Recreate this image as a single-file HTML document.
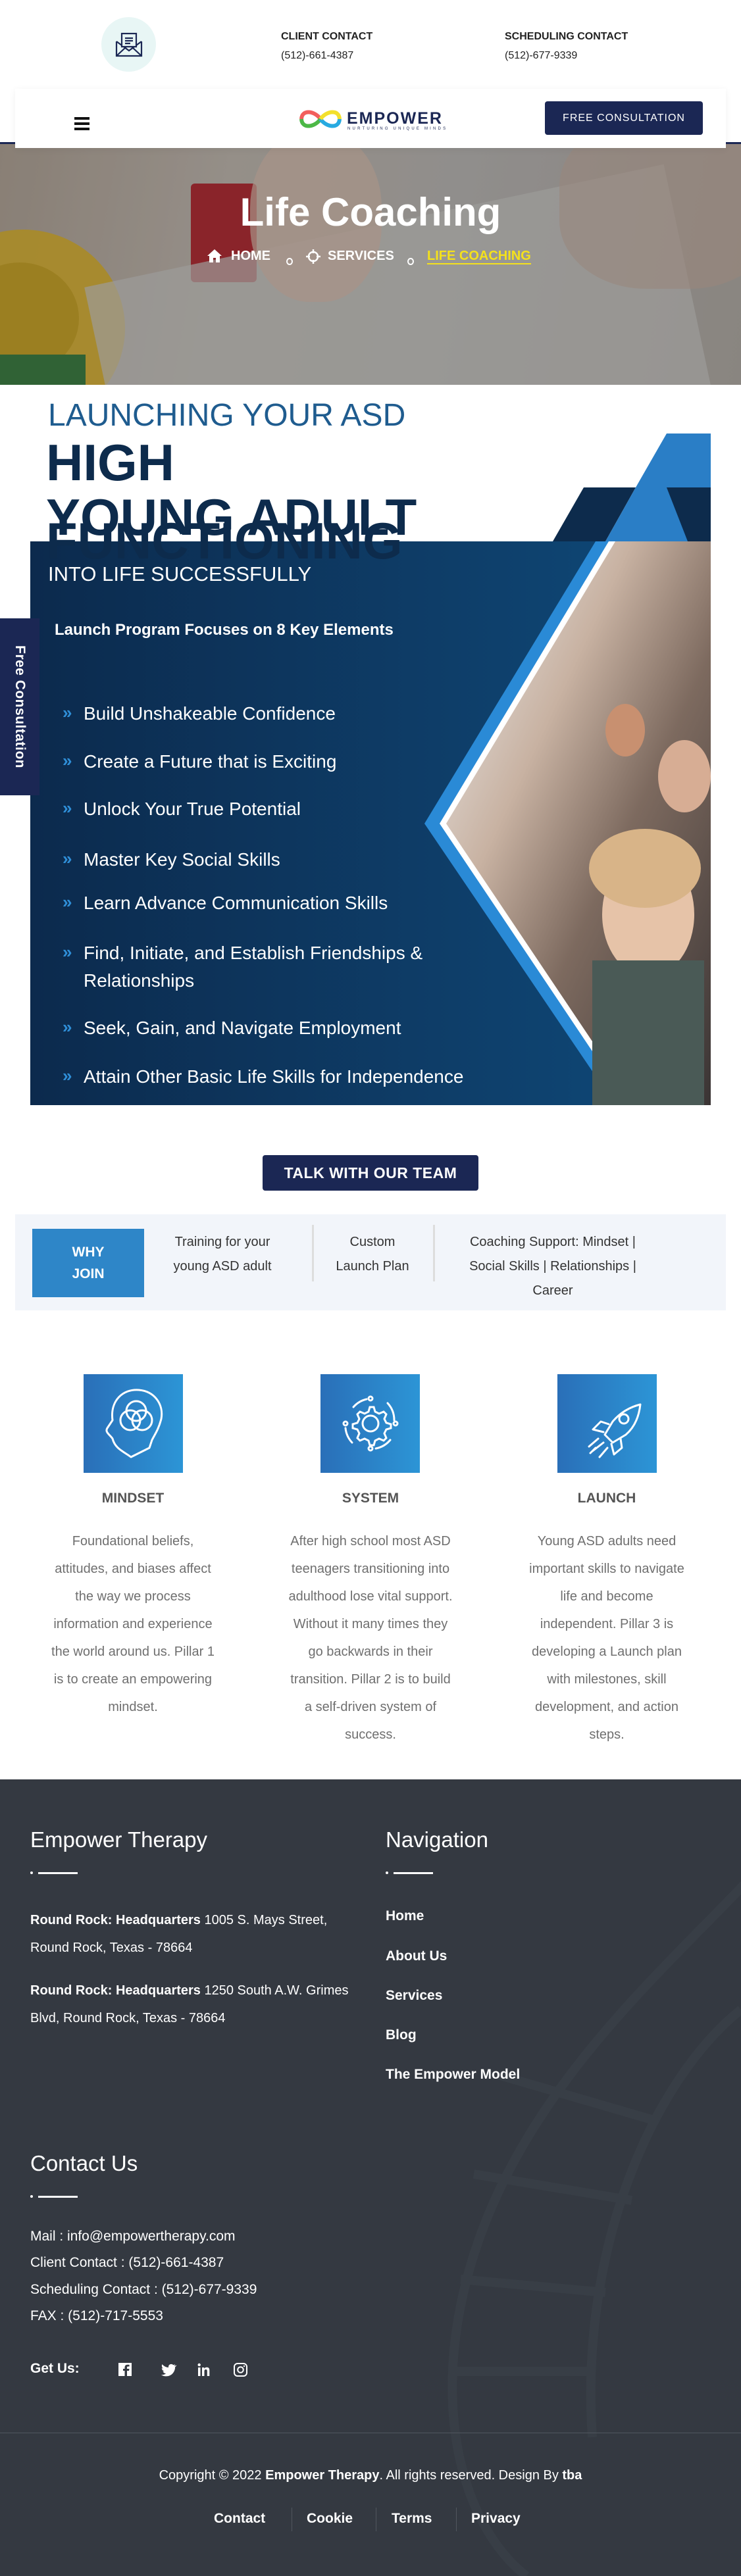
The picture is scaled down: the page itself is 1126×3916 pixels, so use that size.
<!DOCTYPE html>
<html><head><meta charset="utf-8">
<style>
*{box-sizing:border-box;margin:0;padding:0}
body{width:1126px;height:3916px;overflow:hidden;background:#fff;font-family:"Liberation Sans",sans-serif;position:relative}
.a{position:absolute}
.hd{font-weight:bold;font-size:16px;color:#222}
.ph{font-size:16px;color:#222}
.bul{position:absolute;left:95px;color:#2f8fd8;font-size:26px;font-weight:bold}
.bt{position:absolute;left:127px;color:#fff;font-size:28px;line-height:42px}
.pt{position:absolute;width:256px;text-align:center;color:#6f6f6f;font-size:20px;line-height:42px}
.ptt{position:absolute;width:300px;text-align:center;color:#555;font-size:21px;font-weight:bold}
.ib{position:absolute;top:2089px;width:151px;height:150px;background:linear-gradient(90deg,#2a6fb8,#2c95d6)}
.ft{color:#fff}
.fh{position:absolute;font-size:33px;color:#fff}
.ul{position:absolute;height:3px;background:#fff}
.nl{position:absolute;left:586px;font-size:21px;font-weight:bold;color:#fff}
.ci{position:absolute;left:46px;font-size:21px;color:#fff}
</style></head><body>

<div class="a" style="left:154px;top:26px;width:83px;height:83px;border-radius:50%;background:#e8f6f5"></div>
<svg class="a" style="left:175px;top:49px" width="42" height="38" viewBox="0 0 42 38" fill="none" stroke="#1b2754" stroke-width="2.2">
<path d="M2 14 L2 36 L40 36 L40 14"/><path d="M2 36 L17 22 M40 36 L25 22"/><path d="M2 14 L21 28 L40 14"/><rect x="10" y="2" width="22" height="20" fill="#e8f6f5"/><path d="M15 9h12M15 13h12M15 17h8"/></svg>
<div class="a hd" style="left:427px;top:47px">CLIENT CONTACT</div>
<div class="a ph" style="left:427px;top:76px">(512)-661-4387</div>
<div class="a hd" style="left:767px;top:47px">SCHEDULING CONTACT</div>
<div class="a ph" style="left:767px;top:76px">(512)-677-9339</div>

<div class="a" style="left:0;top:216px;width:1126px;height:369px;background:#1b2754"></div>
<div class="a" style="left:0;top:219px;width:1126px;height:366px;overflow:hidden;background:linear-gradient(100deg,#9a8e82 0%,#a9a199 30%,#a3a09e 60%,#9a958f 100%)">
  <div class="a" style="left:-120px;top:130px;width:310px;height:300px;border-radius:50%;background:#c29c22;opacity:.9"></div>
  <div class="a" style="left:-60px;top:180px;width:180px;height:170px;border-radius:50%;background:#b08e1c"></div>
  <div class="a" style="left:290px;top:60px;width:100px;height:150px;background:#9c1f26;border-radius:6px"></div>
  <div class="a" style="left:-10px;top:320px;width:140px;height:60px;background:#2e6b34"></div>
  <div class="a" style="left:160px;top:120px;width:900px;height:400px;background:#b2b0ae;transform:rotate(-12deg);opacity:.7"></div>
  <div class="a" style="left:380px;top:-20px;width:200px;height:260px;border-radius:45%;background:#c0a698;opacity:.7"></div>
  <div class="a" style="left:850px;top:-40px;width:330px;height:260px;border-radius:40%;background:#ae978a;opacity:.6"></div>
  <div class="a" style="left:0;top:0;width:1126px;height:366px;background:rgba(60,60,60,.18)"></div>
</div>
<div class="a" style="left:23px;top:135px;width:1080px;height:90px;background:#fff;box-shadow:0 2px 10px rgba(0,0,0,.06)"></div>
<div class="a" style="left:113px;top:178px;width:23px;height:4px;background:#111"></div>
<div class="a" style="left:113px;top:186px;width:23px;height:4px;background:#111"></div>
<div class="a" style="left:113px;top:194px;width:23px;height:4px;background:#111"></div>
<svg class="a" style="left:453px;top:163px" width="68" height="36" viewBox="0 0 68 36" fill="none" stroke-width="6">
<path d="M34 18 C26 6 6 2 5 18" stroke="#f25f5c"/><path d="M5 18 C6 34 26 30 34 18" stroke="#4cb847"/><path d="M34 18 C42 30 62 34 63 18" stroke="#27aae1"/><path d="M63 18 C62 2 42 6 34 18" stroke="#f3e02c"/></svg>
<div class="a" style="left:527px;top:166px;font-size:25px;font-weight:bold;color:#1b2754;letter-spacing:2px">EMPOWER</div>
<div class="a" style="left:528px;top:193px;font-size:6px;color:#1b2754;letter-spacing:3.2px">NURTURING UNIQUE MINDS</div>
<div class="a" style="left:828px;top:154px;width:240px;height:51px;background:#1b2754;border-radius:4px;color:#fff;font-size:16px;letter-spacing:1px;text-align:center;line-height:51px">FREE CONSULTATION</div>

<div class="a" style="left:0;top:288px;width:1126px;text-align:center;color:#fff;font-size:60px;font-weight:bold">Life Coaching</div>
<svg class="a" style="left:314px;top:378px" width="24" height="22" viewBox="0 0 24 22" fill="#fff"><path d="M12 1 L1 11 L4 11 L4 21 L10 21 L10 14 L14 14 L14 21 L20 21 L20 11 L23 11 Z"/></svg>
<div class="a" style="left:351px;top:378px;color:#fff;font-size:20px;font-weight:bold">HOME</div>
<div class="a" style="left:435px;top:392px;width:10px;height:11px;border:2px solid #fff;border-radius:50%"></div>
<svg class="a" style="left:465px;top:379px" width="22" height="22" viewBox="0 0 22 22" fill="none" stroke="#fff" stroke-width="2.5"><circle cx="11" cy="11" r="7"/><path d="M11 0v6M11 16v6M0 11h6M16 11h6"/></svg>
<div class="a" style="left:498px;top:378px;color:#fff;font-size:20px;font-weight:bold">SERVICES</div>
<div class="a" style="left:619px;top:392px;width:10px;height:11px;border:2px solid #fff;border-radius:50%"></div>
<div class="a" style="left:649px;top:378px;color:#f4e11c;font-size:20px;font-weight:bold;border-bottom:2px solid #f4e11c;line-height:22px">LIFE COACHING</div>

<svg class="a" style="left:0;top:640px" width="1126" height="1045" viewBox="0 640 1126 1045">
<defs><linearGradient id="bg" x1="0" x2="1"><stop offset="0" stop-color="#0c2a4d"/><stop offset="1" stop-color="#0f4a7a"/></linearGradient>
<linearGradient id="ph" x1="0" x2="1" y1="0" y2="1"><stop offset="0" stop-color="#eef0f2"/><stop offset=".35" stop-color="#c8b2a2"/><stop offset=".6" stop-color="#7d6a5f"/><stop offset="1" stop-color="#3a3434"/></linearGradient></defs>
<polygon points="887,741 966,741 920,823 840,823" fill="#0d2b4c"/>
<polygon points="1013,659 1080,659 1080,741 1050,823 920,823 966,741" fill="#2a7ec6"/>
<polygon points="1013,741 1080,741 1080,823 1045,823" fill="#0d2b4c"/>
<rect x="46" y="823" width="1034" height="857" fill="url(#bg)"/>
<polygon points="905,823 1080,823 1080,1680 935,1680 645,1252" fill="#2a8ad6"/>
<polygon points="925,823 1080,823 1080,1680 955,1680 668,1252" fill="#ffffff"/>
<polygon points="935,823 1080,823 1080,1680 965,1680 678,1252" fill="url(#ph)"/>
<ellipse cx="985" cy="1390" rx="70" ry="95" fill="#e6c3a8"/>
<ellipse cx="980" cy="1320" rx="85" ry="60" fill="#d8b488"/>
<rect x="900" y="1460" width="170" height="220" fill="#4a5a56"/>
<ellipse cx="1040" cy="1180" rx="40" ry="55" fill="#d7ad94"/>
<ellipse cx="950" cy="1110" rx="30" ry="40" fill="#c89070"/>
</svg>
<div class="a" style="left:73px;top:604px;font-size:48px;color:#1f5c8f">LAUNCHING YOUR ASD</div>
<div class="a" style="left:70px;top:663px;font-size:78px;font-weight:bold;color:#0d2b4c;line-height:80px">HIGH</div>
<div class="a" style="left:70px;top:782px;font-size:78px;font-weight:bold;color:#0d2b4c;line-height:80px">FUNCTIONING</div>
<div class="a" style="left:70px;top:746px;font-size:78px;font-weight:bold;color:#0d2b4c;line-height:80px">YOUNG ADULT</div>
<div class="a" style="left:73px;top:855px;font-size:31px;color:#fff">INTO LIFE SUCCESSFULLY</div>
<div class="a" style="left:83px;top:944px;font-size:24px;font-weight:bold;color:#fff">Launch Program Focuses on 8 Key Elements</div>
<div class="bul" style="top:1068px">»</div><div class="bt" style="top:1064px">Build Unshakeable Confidence</div>
<div class="bul" style="top:1141px">»</div><div class="bt" style="top:1137px">Create a Future that is Exciting</div>
<div class="bul" style="top:1213px">»</div><div class="bt" style="top:1209px">Unlock Your True Potential</div>
<div class="bul" style="top:1290px">»</div><div class="bt" style="top:1286px">Master Key Social Skills</div>
<div class="bul" style="top:1356px">»</div><div class="bt" style="top:1352px">Learn Advance Communication Skills</div>
<div class="bul" style="top:1432px">»</div><div class="bt" style="top:1428px">Find, Initiate, and Establish Friendships &amp;<br>Relationships</div>
<div class="bul" style="top:1546px">»</div><div class="bt" style="top:1542px">Seek, Gain, and Navigate Employment</div>
<div class="bul" style="top:1620px">»</div><div class="bt" style="top:1616px">Attain Other Basic Life Skills for Independence</div>

<div class="a" style="left:0;top:940px;width:60px;height:269px;background:#1b2754"></div>
<div class="a" style="left:12px;top:948px;width:36px;height:254px;writing-mode:vertical-rl;color:#fff;font-weight:bold;font-size:21px;line-height:36px;text-align:center;letter-spacing:.5px">Free Consultation</div>

<div class="a" style="left:399px;top:1756px;width:328px;height:54px;background:#1b2754;border-radius:4px;color:#fff;font-weight:bold;font-size:23px;letter-spacing:.5px;text-align:center;line-height:54px">TALK WITH OUR TEAM</div>

<div class="a" style="left:23px;top:1846px;width:1080px;height:146px;background:#f2f5fa"></div>
<div class="a" style="left:49px;top:1868px;width:170px;height:104px;background:#2e86c8;color:#fff;font-weight:bold;font-size:21px;text-align:center;line-height:33px;padding-top:19px">WHY<br>JOIN</div>
<div class="a" style="left:228px;top:1870px;width:220px;text-align:center;font-size:20px;line-height:37px;color:#333">Training for your<br>young ASD adult</div>
<div class="a" style="left:474px;top:1862px;width:3px;height:86px;background:#ddd"></div>
<div class="a" style="left:486px;top:1870px;width:160px;text-align:center;font-size:20px;line-height:37px;color:#333">Custom<br>Launch Plan</div>
<div class="a" style="left:658px;top:1862px;width:3px;height:86px;background:#ddd"></div>
<div class="a" style="left:680px;top:1870px;width:320px;text-align:center;font-size:20px;line-height:37px;color:#333">Coaching Support: Mindset |<br>Social Skills | Relationships |<br>Career</div>

<div class="ib" style="left:127px"></div>
<svg class="a" style="left:127px;top:2089px" width="151" height="150" viewBox="0 0 151 150" fill="none" stroke="#fff" stroke-width="3" stroke-linecap="round" stroke-linejoin="round">
<path d="M72 126 C62 118 48 114 44 98 C40 92 32 88 36 82 L44 70 C40 40 60 22 84 24 C108 26 122 46 118 68 C114 84 108 92 104 100 L100 112 Z"/>
<circle cx="80" cy="56" r="15"/><circle cx="71" cy="70" r="15"/><circle cx="89" cy="70" r="15"/></svg>
<div class="ib" style="left:487px"></div>
<svg class="a" style="left:487px;top:2089px" width="151" height="150" viewBox="0 0 151 150" fill="none" stroke="#fff" stroke-width="3" stroke-linecap="round">
<circle cx="76" cy="75" r="12"/>
<path d="M76 50 l5 0 2 7 6 3 7-3 4 4-3 7 3 6 7 2 0 6-7 2-3 6 3 7-4 4-7-3-6 3-2 7-6 0-2-7-6-3-7 3-4-4 3-7-3-6-7-2 0-6 7-2 3-6-3-7 4-4 7 3 6-3 2-7z"/>
<path d="M50 50 A38 38 0 0 1 70 38 M102 44 A38 38 0 0 1 112 70 M106 100 A38 38 0 0 1 84 113 M48 104 A38 38 0 0 1 38 82"/>
<circle cx="76" cy="37" r="3"/><circle cx="114" cy="75" r="3"/><circle cx="76" cy="113" r="3"/><circle cx="38" cy="75" r="3"/></svg>
<div class="ib" style="left:847px"></div>
<svg class="a" style="left:847px;top:2089px" width="151" height="150" viewBox="0 0 151 150" fill="none" stroke="#fff" stroke-width="3" stroke-linecap="round" stroke-linejoin="round">
<path d="M126 46 C110 50 96 58 84 72 L72 92 L84 104 L104 92 C118 80 124 64 126 46 Z"/><circle cx="101" cy="68" r="7"/>
<path d="M78 76 L66 72 L54 84 L70 88 M96 98 L98 112 L86 122 L82 106"/>
<path d="M70 104 L52 118 M62 98 L48 110 M76 112 L64 126 M58 112 L50 120"/></svg>
<div class="ptt" style="left:52px;top:2266px">MINDSET</div>
<div class="ptt" style="left:413px;top:2266px">SYSTEM</div>
<div class="ptt" style="left:772px;top:2266px">LAUNCH</div>
<div class="pt" style="left:74px;top:2322px">Foundational beliefs, attitudes, and biases affect the way we process information and experience the world around us. Pillar 1 is to create an empowering mindset.</div>
<div class="pt" style="left:435px;top:2322px">After high school most ASD teenagers transitioning into adulthood lose vital support. Without it many times they go backwards in their transition. Pillar 2 is to build a self-driven system of success.</div>
<div class="pt" style="left:794px;top:2322px">Young ASD adults need important skills to navigate life and become independent. Pillar 3 is developing a Launch plan with milestones, skill development, and action steps.</div>

<div class="a" style="left:0;top:2705px;width:1126px;height:1211px;background:#343941;overflow:hidden">
<svg class="a" style="left:0;top:0" width="1126" height="1211" fill="none" stroke="#383e46" stroke-width="14">
<path d="M1140 150 C1000 300 760 500 700 800 C660 1000 720 1150 800 1211"/>
<path d="M1126 350 C1000 450 880 700 900 1000"/>
<path d="M760 450 L1000 520 M720 600 L960 640 M700 760 L920 780 M690 900 L900 900"/>
</svg>
</div>
<div class="fh" style="left:46px;top:2778px">Empower Therapy</div>
<div class="a" style="left:46px;top:2845px;width:4px;height:4px;border-radius:50%;background:#fff"></div><div class="ul" style="left:58px;top:2846px;width:60px"></div>
<div class="fh" style="left:586px;top:2778px">Navigation</div>
<div class="a" style="left:586px;top:2845px;width:4px;height:4px;border-radius:50%;background:#fff"></div><div class="ul" style="left:598px;top:2846px;width:60px"></div>
<div class="a ft" style="left:46px;top:2898px;width:490px;font-size:20px;line-height:42px"><b>Round Rock: Headquarters</b> 1005 S. Mays Street, Round Rock, Texas - 78664</div>
<div class="a ft" style="left:46px;top:3005px;width:490px;font-size:20px;line-height:42px"><b>Round Rock: Headquarters</b> 1250 South A.W. Grimes Blvd, Round Rock, Texas - 78664</div>
<div class="nl" style="top:2901px">Home</div>
<div class="nl" style="top:2962px">About Us</div>
<div class="nl" style="top:3022px">Services</div>
<div class="nl" style="top:3082px">Blog</div>
<div class="nl" style="top:3142px">The Empower Model</div>
<div class="fh" style="left:46px;top:3270px">Contact Us</div>
<div class="a" style="left:46px;top:3337px;width:4px;height:4px;border-radius:50%;background:#fff"></div><div class="ul" style="left:58px;top:3338px;width:60px"></div>
<div class="ci" style="top:3388px">Mail : info@empowertherapy.com</div>
<div class="ci" style="top:3428px">Client Contact : (512)-661-4387</div>
<div class="ci" style="top:3469px">Scheduling Contact : (512)-677-9339</div>
<div class="ci" style="top:3509px">FAX : (512)-717-5553</div>
<div class="a" style="left:46px;top:3589px;font-size:21px;font-weight:bold;color:#fff">Get Us:</div>
<svg class="a" style="left:180px;top:3592px" width="200" height="22" viewBox="0 0 200 22" fill="#fff">
<path d="M0 0h20v20H13v-8h3l.5-3H13V7c0-1 .3-1.5 1.6-1.5H16.6V3c-.5 0-1.5-.2-2.8-.2-2.7 0-4.3 1.6-4.3 4.5V9H7v3h2.5v8H0z"/>
<path d="M84 4c-1 .4-1.8.6-2.8.7 1-.6 1.7-1.5 2.1-2.6-.9.6-2 .9-3 1.1-1.9-2-5.2-1.700-6.7.6-.6 1-.8 2.1-.5 3.2-3.800-.2-7.2-2-9.6-4.9-1.3 2.2-.6 5 1.5 6.4-.8 0-1.5-.2-2.2-.6 0 2.3 1.7 4.3 3.9 4.8-.7.2-1.5.2-2.2.1.6 2 2.5 3.3 4.6 3.4-2 1.6-4.6 2.3-7.2 2 2.2 1.4 4.8 2.2 7.4 2.2 9 0 14-7.5 13.8-14.3 1-.7 1.8-1.5 2.4-2.5z" transform="translate(3,0)"/>
<rect x="121" y="7" width="3.5" height="13"/><circle cx="122.7" cy="3" r="2.2"/><path d="M127 7h3.3v1.8c.6-1.1 2-2.1 4-2.1 3.4 0 4 2.2 4 5V20h-3.5v-7c0-1.6-.2-3-2-3s-2.3 1.3-2.3 3V20H127z"/>
<rect x="176" y="1" width="19" height="19" rx="5" fill="none" stroke="#fff" stroke-width="2"/><circle cx="185.5" cy="10.5" r="4.3" fill="none" stroke="#fff" stroke-width="2"/><circle cx="191" cy="5" r="1.2"/>
</svg>
<div class="a" style="left:0;top:3698px;width:1126px;height:1px;background:#50565e"></div>
<div class="a" style="left:0;top:3752px;width:1126px;text-align:center;color:#fff;font-size:20px">Copyright © 2022 <b>Empower Therapy</b>. All rights reserved. Design By <b>tba</b></div>
<div class="a" style="left:325px;top:3817px;font-size:21px;font-weight:bold;color:#fff">Contact</div>
<div class="a" style="left:443px;top:3812px;width:1px;height:36px;background:#50565e"></div>
<div class="a" style="left:466px;top:3817px;font-size:21px;font-weight:bold;color:#fff">Cookie</div>
<div class="a" style="left:571px;top:3812px;width:1px;height:36px;background:#50565e"></div>
<div class="a" style="left:595px;top:3817px;font-size:21px;font-weight:bold;color:#fff">Terms</div>
<div class="a" style="left:693px;top:3812px;width:1px;height:36px;background:#50565e"></div>
<div class="a" style="left:716px;top:3817px;font-size:21px;font-weight:bold;color:#fff">Privacy</div>
</body></html>
